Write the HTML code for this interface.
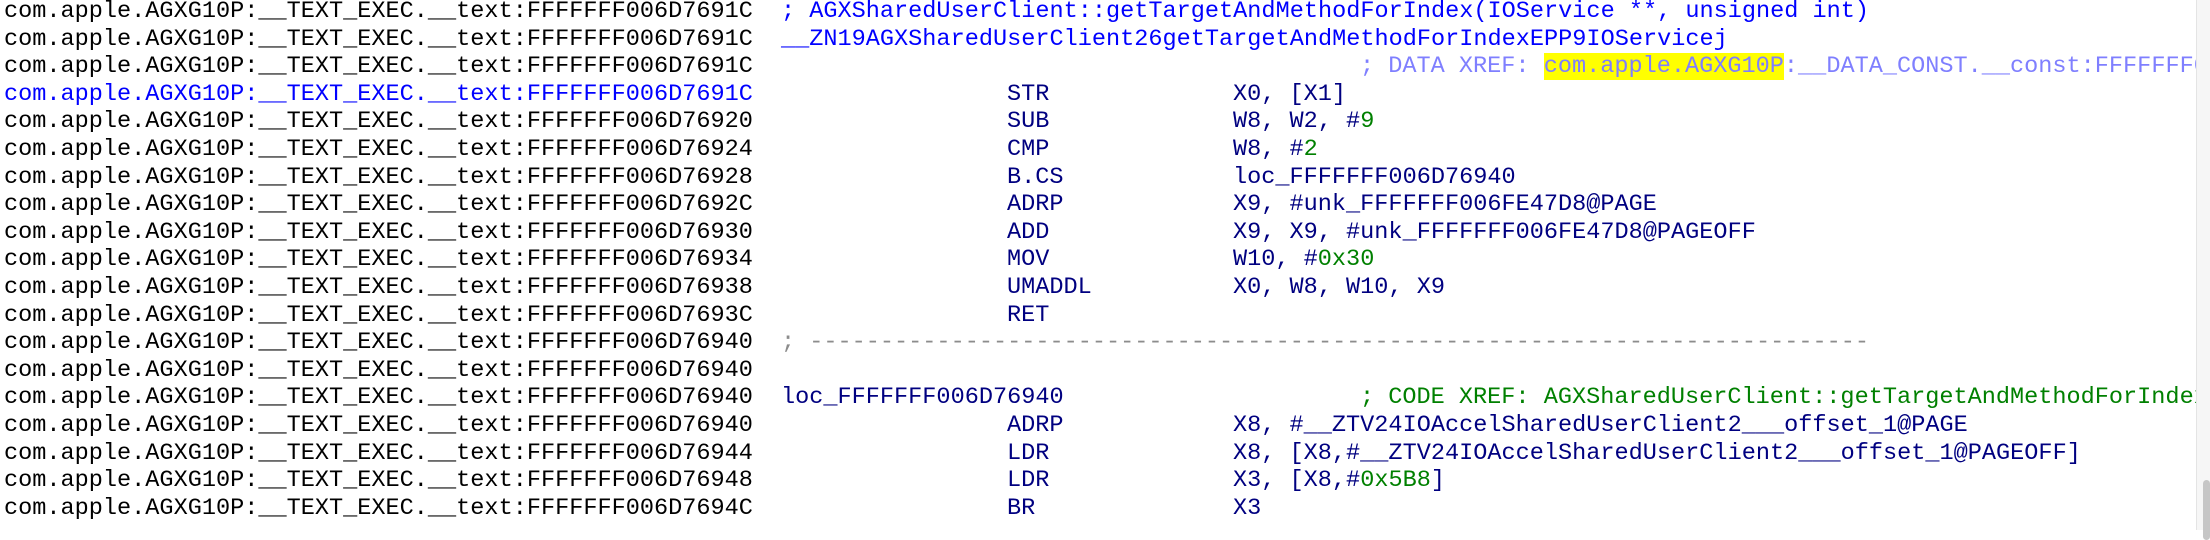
<!DOCTYPE html>
<html><head><meta charset="utf-8">
<style>
html,body{margin:0;padding:0;background:#fff;width:2210px;height:530px;overflow:hidden}
#v{position:absolute;left:0;top:0;width:2196px;height:530px;overflow:hidden;font-family:"Liberation Mono",monospace;font-size:23.55px;color:#000}
.r{position:absolute;left:0;height:27.6px;line-height:27.6px;white-space:pre;width:2196px}
.r span{position:absolute;top:0}
.a{left:4px}
.c55{left:781px}.c57{left:809px}.c71{left:1007px}.c87{left:1233px}.c96{left:1360px}.c97{left:1360px}
.b{color:#0000ff}.n{color:#000080}.g{color:#008000}.p{color:#7f7fff}.gr{color:#8c8c8c}
.hl{background:#ffff00}
#sb{position:absolute;left:2196px;top:0;width:14px;height:530px;background:#f6f6f6;border-left:1px solid #e4e4e4;box-sizing:border-box}
#th{position:absolute;left:2203px;top:480px;width:7px;height:60px;background:#c6c6c6;border-radius:4px}
</style></head><body>
<div id="v">
<div class="r" style="top:-2px"><span class="a">com.apple.AGXG10P:__TEXT_EXEC.__text:FFFFFFF006D7691C</span><span class="c55 b">; AGXSharedUserClient::getTargetAndMethodForIndex(IOService **, unsigned int)</span></div>
<div class="r" style="top:25.6px"><span class="a">com.apple.AGXG10P:__TEXT_EXEC.__text:FFFFFFF006D7691C</span><span class="c55 b">__ZN19AGXSharedUserClient26getTargetAndMethodForIndexEPP9IOServicej</span></div>
<div class="r" style="top:53.2px"><span class="a">com.apple.AGXG10P:__TEXT_EXEC.__text:FFFFFFF006D7691C</span><span class="c96 p">; DATA XREF: <span class="hl" style="position:static">com.apple.AGXG10P</span>:__DATA_CONST.__const:FFFFFFF006F4A0D8</span></div>
<div class="r" style="top:80.8px"><span class="a b">com.apple.AGXG10P:__TEXT_EXEC.__text:FFFFFFF006D7691C</span><span class="c71 n">STR</span><span class="c87 n">X0, [X1]</span></div>
<div class="r" style="top:108.4px"><span class="a">com.apple.AGXG10P:__TEXT_EXEC.__text:FFFFFFF006D76920</span><span class="c71 n">SUB</span><span class="c87 n">W8, W2, #<span class="g" style="position:static">9</span></span></div>
<div class="r" style="top:136px"><span class="a">com.apple.AGXG10P:__TEXT_EXEC.__text:FFFFFFF006D76924</span><span class="c71 n">CMP</span><span class="c87 n">W8, #<span class="g" style="position:static">2</span></span></div>
<div class="r" style="top:163.6px"><span class="a">com.apple.AGXG10P:__TEXT_EXEC.__text:FFFFFFF006D76928</span><span class="c71 n">B.CS</span><span class="c87 n">loc_FFFFFFF006D76940</span></div>
<div class="r" style="top:191.2px"><span class="a">com.apple.AGXG10P:__TEXT_EXEC.__text:FFFFFFF006D7692C</span><span class="c71 n">ADRP</span><span class="c87 n">X9, #unk_FFFFFFF006FE47D8@PAGE</span></div>
<div class="r" style="top:218.8px"><span class="a">com.apple.AGXG10P:__TEXT_EXEC.__text:FFFFFFF006D76930</span><span class="c71 n">ADD</span><span class="c87 n">X9, X9, #unk_FFFFFFF006FE47D8@PAGEOFF</span></div>
<div class="r" style="top:246.4px"><span class="a">com.apple.AGXG10P:__TEXT_EXEC.__text:FFFFFFF006D76934</span><span class="c71 n">MOV</span><span class="c87 n">W10, #<span class="g" style="position:static">0x30</span></span></div>
<div class="r" style="top:274px"><span class="a">com.apple.AGXG10P:__TEXT_EXEC.__text:FFFFFFF006D76938</span><span class="c71 n">UMADDL</span><span class="c87 n">X0, W8, W10, X9</span></div>
<div class="r" style="top:301.6px"><span class="a">com.apple.AGXG10P:__TEXT_EXEC.__text:FFFFFFF006D7693C</span><span class="c71 n">RET</span></div>
<div class="r" style="top:329.2px"><span class="a">com.apple.AGXG10P:__TEXT_EXEC.__text:FFFFFFF006D76940</span><span class="c55 gr">; ---------------------------------------------------------------------------</span></div>
<div class="r" style="top:356.8px"><span class="a">com.apple.AGXG10P:__TEXT_EXEC.__text:FFFFFFF006D76940</span></div>
<div class="r" style="top:384.4px"><span class="a">com.apple.AGXG10P:__TEXT_EXEC.__text:FFFFFFF006D76940</span><span class="c55 n">loc_FFFFFFF006D76940</span><span class="c97 g">; CODE XREF: AGXSharedUserClient::getTargetAndMethodForIndex(IOService **,uint)+C</span></div>
<div class="r" style="top:412px"><span class="a">com.apple.AGXG10P:__TEXT_EXEC.__text:FFFFFFF006D76940</span><span class="c71 n">ADRP</span><span class="c87 n">X8, #__ZTV24IOAccelSharedUserClient2___offset_1@PAGE</span></div>
<div class="r" style="top:439.6px"><span class="a">com.apple.AGXG10P:__TEXT_EXEC.__text:FFFFFFF006D76944</span><span class="c71 n">LDR</span><span class="c87 n">X8, [X8,#__ZTV24IOAccelSharedUserClient2___offset_1@PAGEOFF]</span></div>
<div class="r" style="top:467.2px"><span class="a">com.apple.AGXG10P:__TEXT_EXEC.__text:FFFFFFF006D76948</span><span class="c71 n">LDR</span><span class="c87 n">X3, [X8,#<span class="g" style="position:static">0x5B8</span>]</span></div>
<div class="r" style="top:494.8px"><span class="a">com.apple.AGXG10P:__TEXT_EXEC.__text:FFFFFFF006D7694C</span><span class="c71 n">BR</span><span class="c87 n">X3</span></div>
</div>
<div id="sb"></div><div id="th"></div>
</body></html>
